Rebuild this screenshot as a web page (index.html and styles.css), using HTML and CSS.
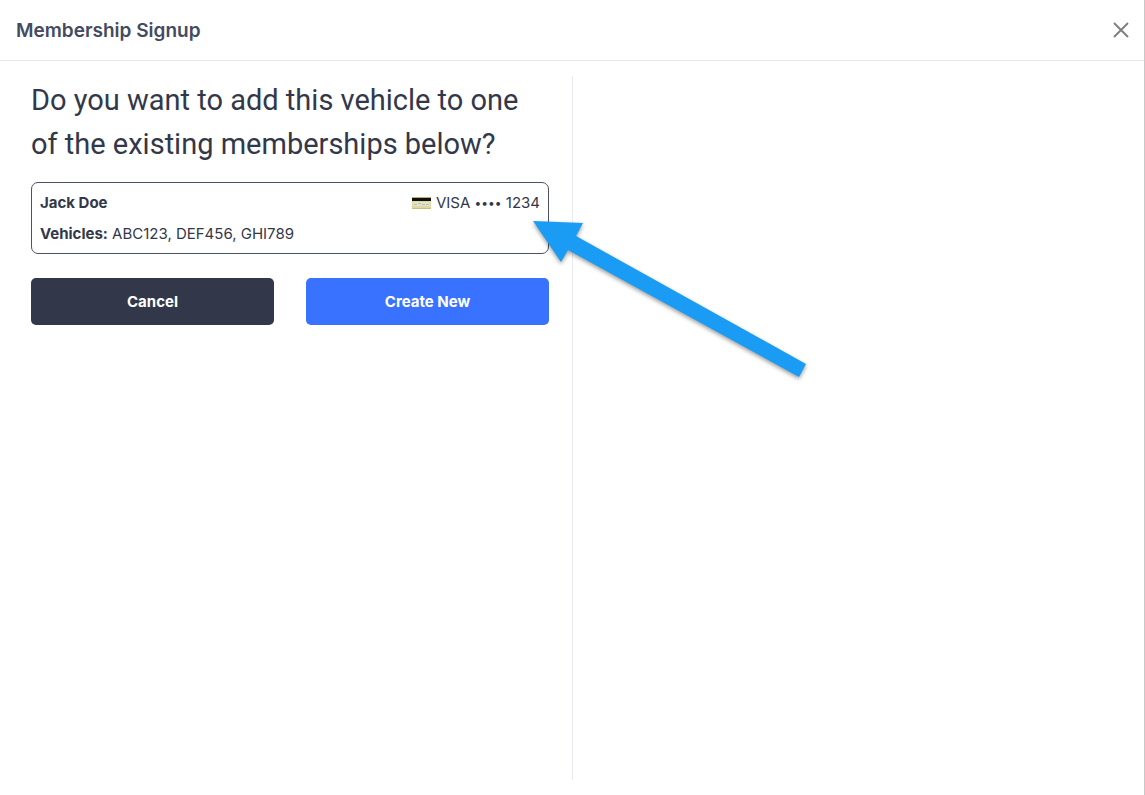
FILE: index.html
```html
<!DOCTYPE html>
<html lang="en">
<head>
    <meta charset="UTF-8">
    <meta name="viewport" content="width=device-width, initial-scale=1.0">
    <title>Membership Signup</title>
    <link rel="stylesheet" href="styles.css">
</head>
<body>

    <div class="modal">
        <header class="modal-header">
            <h1>Membership Signup</h1>
            <button type="button" class="close" aria-label="Close">
                <svg width="16" height="16" viewBox="0 0 16 16">
                    <path d="M1 1L15 15M15 1L1 15" stroke="#808080" stroke-width="2" fill="none"/>
                </svg>
            </button>
        </header>

        <main class="modal-body">
            <section class="signup">
                <h2>Do you want to add this vehicle to one of the existing memberships below?</h2>

                <div class="membership-wrap">
                    <button type="button" class="membership">
                        <span class="row">
                            <strong>Jack Doe</strong>
                            <span class="card">
                                <svg width="19" height="12" viewBox="0 0 19 12">
                                    <rect width="19" height="12" rx="1" fill="#e0d79f"/>
                                    <rect width="19" height="1" fill="#b5ae7f"/>
                                    <rect y="1" width="19" height="3" fill="#11110c"/>
                                    <rect x="1" y="5" width="17" height="4" fill="#e6e3c4"/>
                                    <path d="M2 7.500H5M6 6.500H9M10 7.500H13M14 7.500H17" stroke="#aebfc8"/>
                                    <path d="M0 11.500H19" stroke="#c9bd80"/>
                                </svg>
                                <span>VISA <span class="dots">••••</span> 1234</span>
                            </span>
                        </span>
                        <span class="row">
                            <span><strong>Vehicles:</strong> ABC123, DEF456, GHI789</span>
                        </span>
                    </button>

                    <!-- Arrow pointing at the membership -->
                    <svg class="arrow" width="280" height="164" viewBox="0 0 280 164">
                        <path d="M0 0L50 2L43 15L273 143L266 156L35 29L28 41Z" fill="#1b9cf4"/>
                    </svg>
                </div>

                <div class="actions">
                    <button type="button" class="btn btn-dark">Cancel</button>
                    <button type="button" class="btn btn-primary">Create New</button>
                </div>
            </section>

            <section class="details"></section>
        </main>
    </div>

</body>
</html>
```

FILE: styles.css
```css
* {
    box-sizing: border-box;
}

body {
    margin: 0;
    background-color: white;
    font-family: Inter, "Liberation Sans", sans-serif;
    font-size: 15px;
    color: #32384a;
}

h1, h2 {
    margin: 0;
}

button {
    font-family: inherit;
    font-size: 15px;
    cursor: pointer;
}

.modal {
    display: flex;
    flex-direction: column;
    min-height: 100vh;
    border-right: 1px solid #c8c8c8;
}

.modal-header {
    display: flex;
    justify-content: space-between;
    align-items: center;
    height: 61px;
    padding: 0 15px 0 16px;
    border-bottom: 1px solid #e4e7ee;
}

.modal-header h1 {
    font-size: 19px;
    font-weight: 600;
    color: #444b60;
}

.close {
    display: flex;
    padding: 0;
    border: none;
    background: none;
}

.modal-body {
    flex: 1;
    display: grid;
    grid-template-columns: 1fr 1fr;
    padding: 15px 0;
}

.signup {
    padding: 2px 23px 0 31px;
}

.details {
    border-left: 1px solid #e9eaf3;
}

.signup h2 {
    font-family: Roboto, "Liberation Sans", sans-serif;
    font-size: 29px;
    font-weight: 400;
    line-height: 44px;
}

.membership-wrap {
    position: relative;
    margin-top: 16px;
}

.membership {
    display: flex;
    flex-direction: column;
    gap: 7px;
    width: 100%;
    padding: 8px 8px 7px;
    border: 1px solid #4c5262;
    border-radius: 7px;
    background-color: white;
    color: inherit;
    line-height: 24px;
    text-align: left;
}

.row {
    display: flex;
    justify-content: space-between;
}

.row strong {
    font-weight: 700;
}

.card {
    display: flex;
    align-items: center;
    gap: 5px;
}

.dots {
    font-size: 12px;
    line-height: 12px;
    vertical-align: 1px;
}

.arrow {
    position: absolute;
    top: 39px;
    left: calc(100% - 16px);
    overflow: visible;
    pointer-events: none;
    filter: drop-shadow(0 2px 2px rgba(0, 0, 0, 0.4));
}

.actions {
    display: grid;
    grid-template-columns: 1fr 1fr;
    gap: 32px;
    margin-top: 24px;
}

.btn {
    height: 47px;
    border: none;
    border-radius: 5px;
    font-weight: 700;
    color: white;
}

.btn-dark {
    background-color: #32384a;
}

.btn-primary {
    background-color: #3972ff;
}
```
